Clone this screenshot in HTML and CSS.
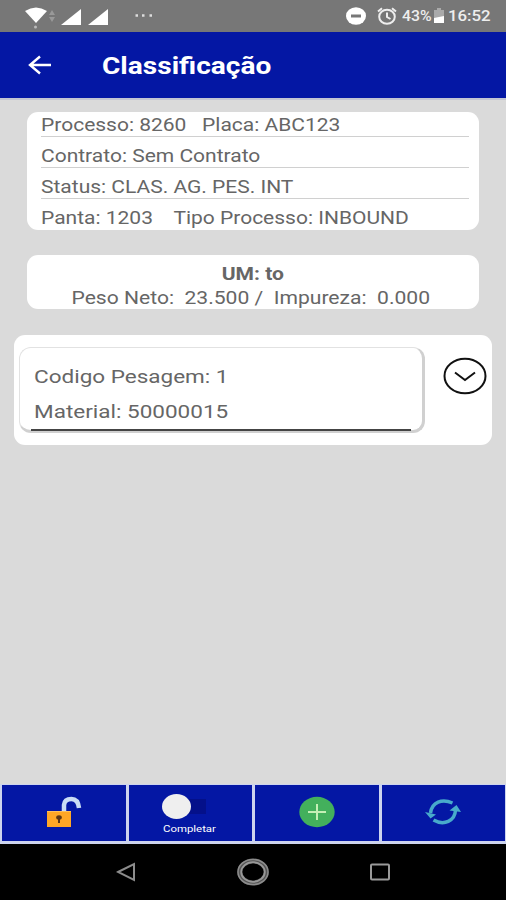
FILE: index.html
```html
<!DOCTYPE html>
<html lang="pt-br">
<head>
    <meta charset="UTF-8">
    <title>Classificação</title>
    <link rel="stylesheet" href="styles.css">
</head>
<body>
<div class="status-bar">
    <svg class="signal" width="140" height="32" viewBox="0 0 140 32">
        <path d="M25 11Q36 4 47 11L36 23Z" fill="#fff"/>
        <circle cx="35.500" cy="27" r="1.500" fill="#bbb"/>
        <path d="M49 15L52 10L55 15ZM49 17L52 22L55 17Z" fill="#999"/>
        <path d="M61 25L81 9V25ZM88 25L108 9V25Z" fill="#fff"/>
        <path d="M135.500 15.500h2.500" stroke="#ddd" stroke-width="2.500"/>
    </svg>
    <svg class="dots" width="14" height="32" viewBox="0 0 14 32">
        <path d="M2 15.500h2.500M9.500 15.500h2.500" stroke="#ddd" stroke-width="2.500"/>
    </svg>
    <svg class="silent" width="20" height="18" viewBox="0 0 20 18">
        <ellipse cx="10" cy="9" rx="10" ry="8.700" fill="#fff"/>
        <path d="M5 9h10" stroke="#777" stroke-width="3"/>
    </svg>
    <svg class="alarm" width="20" height="18" viewBox="0 0 20 18" fill="none" stroke="#eee" stroke-width="2">
        <ellipse cx="10" cy="9.700" rx="7.800" ry="7"/>
        <path d="M10 5.500V10L13.500 12M1 4.500L5 1.300M19 4.500L15 1.300"/>
    </svg>
    <div class="percent"><span class="wide">43%</span></div>
    <svg class="battery" width="12" height="16" viewBox="0 0 12 16">
        <path d="M1 2H4V0H8V2H11V15H1Z" fill="#aaa"/>
        <path d="M1 10L11 8V15H1Z" fill="#fff"/>
    </svg>
    <div class="clock"><span class="wide">16:52</span></div>
</div>
<div class="header">
    <svg class="back" width="24" height="20" viewBox="0 0 24 20" fill="none" stroke="#fff" stroke-width="2.400">
        <path d="M23 10H2M12 1.500L2 10L12 18.500"/>
    </svg>
    <h1><span class="wide">Classificação</span></h1>
</div>
<div class="content">
    <div class="card info">
        <div class="row"><span class="wide">Processo: 8260 &nbsp; Placa: ABC123</span></div>
        <div class="row"><span class="wide">Contrato: Sem Contrato</span></div>
        <div class="row"><span class="wide">Status: CLAS. AG. PES. INT</span></div>
        <div class="row"><span class="wide">Panta: 1203 &nbsp;&nbsp; Tipo Processo: INBOUND</span></div>
    </div>
    <div class="card weight">
        <div class="unit"><span class="wide">UM: to</span></div>
        <div><span class="wide">Peso Neto: &nbsp;23.500 / &nbsp;Impureza: &nbsp;0.000</span></div>
    </div>
    <div class="card item">
        <div class="item-box">
            <div class="item-text">
                <div><span class="wide">Codigo Pesagem: 1</span></div>
                <div><span class="wide">Material: 50000015</span></div>
            </div>
        </div>
        <svg class="expand" width="44" height="38" viewBox="0 0 44 38" fill="none" stroke="#111" stroke-width="2">
            <ellipse cx="22" cy="19" rx="20.500" ry="17.300"/>
            <path d="M12 15.500L22 23L32 15.500"/>
        </svg>
    </div>
</div>
<div class="toolbar">
    <div class="button">
        <svg width="36" height="32" viewBox="0 0 36 32">
            <path d="M18 15V9Q18.500 3 25.500 3Q32 3 33 12" fill="none" stroke="#c9dcf5" stroke-width="4.500"/>
            <rect x="1" y="15" width="24" height="16" fill="#ffa726"/>
            <path d="M1 15.500H25" stroke="#ffc05a"/>
            <ellipse cx="13" cy="21.500" rx="2.800" ry="2.200" fill="#5a3515"/>
            <path d="M13 22v5" stroke="#5a3515" stroke-width="2"/>
        </svg>
    </div>
    <div class="button complete">
        <div class="switch"></div>
        <div class="label"><span class="wide">Completar</span></div>
    </div>
    <div class="button">
        <svg width="36" height="32" viewBox="0 0 36 32">
            <ellipse cx="18" cy="16" rx="17.700" ry="15.200" fill="#43b05c"/>
            <path d="M9 16H27M18 8V24" stroke="#c5efb5" stroke-width="2"/>
        </svg>
    </div>
    <div class="button">
        <svg width="36" height="32" viewBox="0 0 36 32" fill="none" stroke="#48aacb" stroke-width="3.500">
            <path d="M27.500 7C17 2.500 7 6 5.500 17M8.500 24C19 30 30 25 30.500 14"/>
            <path d="M0 16L11 18.500L5.500 22.500ZM24.500 14.500L31.500 9L36 16Z" fill="#48aacb" stroke="none"/>
        </svg>
    </div>
</div>
<div class="nav">
    <svg width="20" height="20" viewBox="0 0 20 20" fill="none" stroke="#8c8c8c" stroke-width="2">
        <path d="M2 10L18 2V18Z"/>
    </svg>
    <svg width="34" height="28" viewBox="0 0 34 28">
        <ellipse cx="17" cy="14" rx="13.200" ry="11" fill="none" stroke="#555" stroke-width="5"/>
        <ellipse cx="17" cy="14" rx="15" ry="12.500" fill="none" stroke="#8c8c8c" stroke-width="1.500"/>
        <ellipse cx="17" cy="14" rx="11.800" ry="9.800" fill="none" stroke="#999" stroke-width="1.800"/>
    </svg>
    <svg width="20" height="18" viewBox="0 0 20 18" fill="none" stroke="#999" stroke-width="2">
        <rect x="1" y="1.500" width="18" height="15" rx="1"/>
    </svg>
</div>
</body>
</html>
```
FILE: styles.css
```css
*{
    margin: 0;
    padding: 0;
    box-sizing: border-box;
}
body{
    width: 506px;
    height: 900px;
    display: flex;
    flex-direction: column;
    overflow: hidden;
    background: #dadada;
    font-family: Roboto, "Liberation Sans", sans-serif;
    font-size: 17.5px;
    color: #666;
    white-space: nowrap;
}
svg{
    display: block;
    flex: none;
}
.wide{
    display: inline-block;
    transform: scaleX(1.2);
    transform-origin: left center;
}
.status-bar{
    height: 32px;
    background: #777;
    display: flex;
    align-items: center;
    color: #eee;
    font-size: 14px;
    font-weight: 500;
}
.silent{
    margin-left: 192px;
}
.alarm{
    margin-left: 11px;
}
.percent{
    width: 31px;
    margin-left: 5px;
}
.percent .wide{
    transform: scaleX(1.13);
}
.clock{
    margin-left: 3px;
}
.header{
    height: 66px;
    background: #0417a4;
    display: flex;
    align-items: center;
    padding-left: 28px;
    color: #fff;
}
.header h1{
    margin-left: 50px;
    font-size: 23px;
    line-height: 30px;
    font-weight: 700;
    padding-top: 4px;
}
.header .wide{
    transform: scaleX(1.22);
}
.content{
    flex: 1;
    border-top: 2px solid #c3c5d3;
    padding: 12px 14px 0;
}
.card{
    background: #fff;
    border-radius: 11px;
}
.info{
    height: 118px;
    margin: 0 13px;
    padding: 0 10px 0 14px;
}
.row{
    height: 31px;
    line-height: 39px;
    border-bottom: 1px solid #d0d0d0;
}
.row:first-child{
    height: 25px;
    line-height: 27px;
}
.row:last-child{
    border-bottom: none;
}
.weight{
    height: 54px;
    margin: 25px 13px 0;
    padding-top: 7px;
    line-height: 24px;
    text-align: center;
}
.weight .wide{
    transform: scaleX(1.205);
    transform-origin: center;
}
.weight div:last-child .wide{
    transform: translateX(-2px) scaleX(1.205);
}
.unit{
    font-weight: 700;
}
.item{
    height: 110px;
    margin-top: 26px;
    padding: 12px 5px;
    display: flex;
}
.item-box{
    width: 406px;
    height: 86px;
    padding: 0 11px;
    border: 1px solid #e2e2e2;
    border-right: 3px solid #d0d0d0;
    border-bottom: 3px solid #d0d0d0;
    border-radius: 12px;
}
.item-text{
    height: 83px;
    padding: 11px 0 0 3px;
    line-height: 35px;
    font-size: 18px;
    border-bottom: 2px solid #444;
}
.item-text .wide{
    transform: scaleX(1.25);
}
.expand{
    margin: 10px 0 0 18px;
}
.toolbar{
    height: 60px;
    background: #cdd4ee;
    padding: 1px 1px 3px 2px;
    display: grid;
    grid-template-columns: repeat(4, 1fr);
    gap: 3px;
}
.button{
    background: #0417a4;
    display: flex;
    align-items: center;
    justify-content: center;
    padding-bottom: 3px;
}
.complete{
    flex-direction: column;
    align-items: flex-start;
    justify-content: flex-start;
    padding-left: 33px;
    padding-top: 9px;
    color: #fff;
}
.switch{
    width: 45px;
    height: 25px;
    background: linear-gradient(#04108a, #04108a) 20px 5px / 24px 15px no-repeat;
}
.switch::before{
    content: "";
    display: block;
    width: 29px;
    height: 25px;
    border-radius: 50%;
    background: #efefef;
}
.label{
    margin-top: 3px;
    padding-left: 1px;
    font-size: 9.5px;
    line-height: 14px;
}
.nav{
    height: 56px;
    background: #000;
    display: flex;
    align-items: center;
    justify-content: center;
    gap: 100px;
}
```
